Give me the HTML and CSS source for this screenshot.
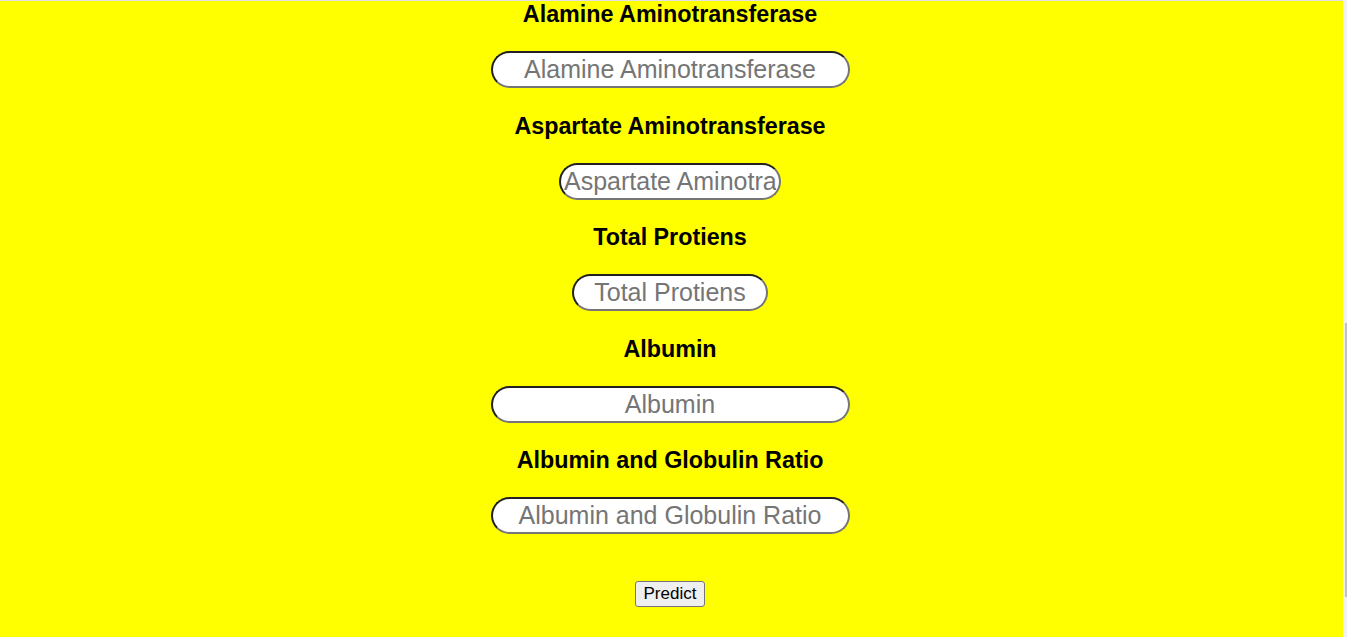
FILE: index.html
```html
<!DOCTYPE html>
<html lang="en">
<head>
<meta charset="utf-8">
<title>Liver Disease Prediction</title>
<link rel="stylesheet" href="styles.css">
</head>
<body>
<div class="page">
  <form class="form">
    <label class="field-label" for="alt">Alamine Aminotransferase</label>
    <input class="field-input w-wide" id="alt" type="text" placeholder="Alamine Aminotransferase">
    <label class="field-label" for="ast">Aspartate Aminotransferase</label>
    <input class="field-input w-mid" id="ast" type="text" placeholder="Aspartate Aminotransferase">
    <label class="field-label" for="tp">Total Protiens</label>
    <input class="field-input w-small" id="tp" type="text" placeholder="Total Protiens">
    <label class="field-label" for="alb">Albumin</label>
    <input class="field-input w-wide" id="alb" type="text" placeholder="Albumin">
    <label class="field-label" for="agr">Albumin and Globulin Ratio</label>
    <input class="field-input w-wide" id="agr" type="text" placeholder="Albumin and Globulin Ratio">
    <button class="submit" type="button">Predict</button>
  </form>
</div>
<div class="scrollbar"><div class="scrollbar-thumb"></div></div>
</body>
</html>
```

FILE: styles.css
```css
html, body {
  margin: 0;
  padding: 0;
  height: 100%;
  overflow: hidden;
  background: #ffff00;
}

body {
  font-family: "Liberation Sans", Arial, sans-serif;
  border-top: 1px solid #e2e2e2;
  box-sizing: border-box;
}

.page {
  width: 1340px;
}

.form {
  display: flex;
  flex-direction: column;
  align-items: center;
  padding-top: 0;
}

.field-label {
  font-weight: bold;
  font-size: 23.3px;
  line-height: 27px;
  color: #000;
  margin-bottom: 23px;
}

.field-input {
  box-sizing: border-box;
  height: 37px;
  margin-bottom: 24.5px;
  padding: 0 3px;
  border: 2px inset #767676;
  border-radius: 19px;
  background: #fff;
  font-family: "Liberation Sans", Arial, sans-serif;
  font-size: 25px;
  text-align: center;
  color: #000;
}

.field-input::placeholder {
  color: #757575;
}

.w-wide { width: 359px; }
.w-mid { width: 222px; }
.w-small { width: 196px; }

.submit {
  margin-top: 22px;
  width: 70px;
  height: 26px;
  padding: 0;
  background: #efefef;
  border: 1px solid #767676;
  border-radius: 3px;
  font-family: "Liberation Sans", Arial, sans-serif;
  font-size: 17px;
  color: #000;
}

.scrollbar {
  position: fixed;
  top: 0;
  right: 0;
  width: 4px;
  height: 100%;
  background: #f1f1f1;
}

.scrollbar-thumb {
  position: absolute;
  top: 323px;
  right: 0;
  width: 2px;
  height: 274px;
  background: #c1c1c1;
}
```
